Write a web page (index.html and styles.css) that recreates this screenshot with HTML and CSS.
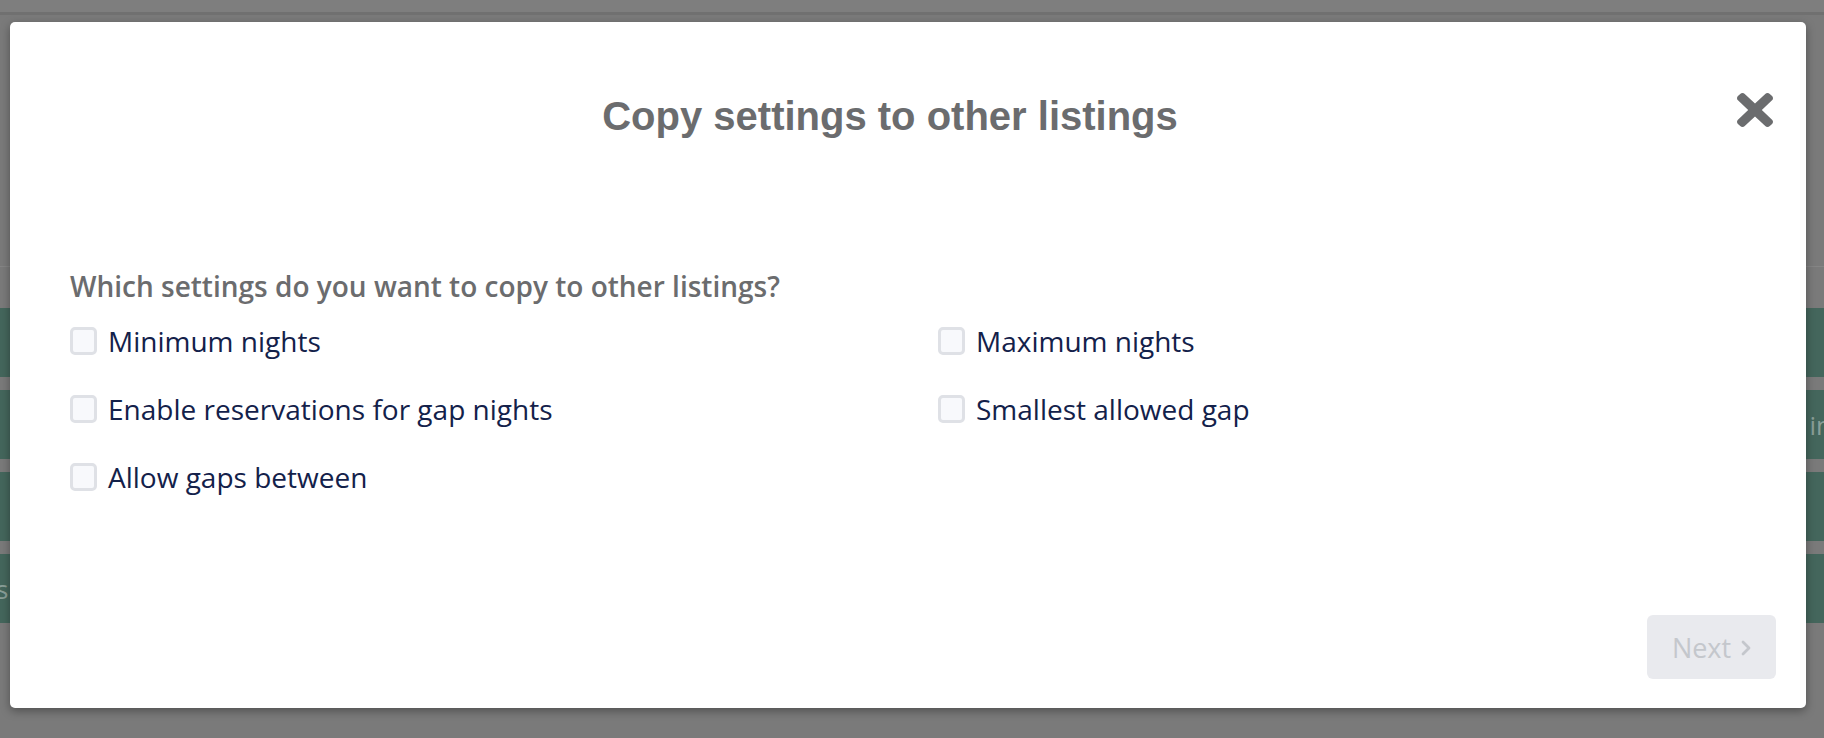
FILE: index.html
```html
<!DOCTYPE html>
<html lang="en">
<head>
<meta charset="utf-8">
<title>Copy settings to other listings</title>
<link rel="stylesheet" href="styles.css">
</head>
<body>
<div class="page">
  <div class="topbar"></div>
  <div class="subline"></div>
  <div class="rows">
    <div class="row"></div>
    <div class="row"><span class="row-text right">in</span></div>
    <div class="row"></div>
    <div class="row"><span class="row-text">s</span></div>
  </div>
</div>

<div class="modal" role="dialog" aria-labelledby="modal-title">
  <button class="close" aria-label="Close">
    <svg viewBox="0 80 352 352" width="36" height="34" preserveAspectRatio="none" aria-hidden="true">
      <path fill="#6b6c6e" d="M242.72 256l100.07-100.07c12.28-12.28 12.28-32.19 0-44.48l-22.24-22.24c-12.28-12.28-32.19-12.28-44.48 0L176 189.28 75.93 89.21c-12.28-12.28-32.19-12.28-44.48 0L9.21 111.45c-12.28 12.28-12.28 32.19 0 44.48L109.28 256 9.21 356.07c-12.28 12.28-12.28 32.19 0 44.48l22.24 22.24c12.28 12.28 32.2 12.28 44.48 0L176 322.72l100.07 100.07c12.28 12.28 32.2 12.28 44.48 0l22.24-22.24c12.28-12.28 12.28-32.19 0-44.48L242.72 256z"/>
    </svg>
  </button>
  <div class="header">
    <h1 id="modal-title" class="title">Copy settings to other listings</h1>
  </div>
  <div class="body">
    <p class="question">Which settings do you want to copy to other listings?</p>
    <div class="options">
      <label class="option"><span class="box"></span><span class="label">Minimum nights</span></label>
      <label class="option"><span class="box"></span><span class="label">Maximum nights</span></label>
      <label class="option"><span class="box"></span><span class="label">Enable reservations for gap nights</span></label>
      <label class="option"><span class="box"></span><span class="label">Smallest allowed gap</span></label>
      <label class="option"><span class="box"></span><span class="label">Allow gaps between</span></label>
    </div>
  </div>
  <div class="footer">
    <button class="next" disabled>
      <span>Next</span>
      <svg class="chev" viewBox="0 0 10 16" width="10" height="16" aria-hidden="true">
        <polyline points="2,2 8,8 2,14" fill="none" stroke="#c4c7cc" stroke-width="2.8" stroke-linecap="round" stroke-linejoin="round"/>
      </svg>
    </button>
  </div>
</div>
</body>
</html>
```

FILE: styles.css
```css
* { box-sizing: border-box; }

html, body {
  margin: 0;
  padding: 0;
}

body {
  width: 1824px;
  height: 738px;
  overflow: hidden;
  background: #7a7a7a;
  font-family: "Open Sans", "Liberation Sans", sans-serif;
  position: relative;
}

/* dimmed page behind the modal */
.page {
  display: flex;
  flex-direction: column;
}

.topbar {
  height: 15px;
  background: #7e7e7e;
  border-bottom: 3px solid #707070;
}

.subline {
  height: 252px;
  border-bottom: 1px solid #858585;
}

.rows {
  margin-top: 41px;
  display: flex;
  flex-direction: column;
  gap: 13px;
}

.row {
  height: 69px;
  background: #44665c;
  display: flex;
  align-items: center;
  justify-content: flex-start;
  position: relative;
}

.row-text {
  color: #8a9f98;
  font-size: 26px;
  margin-left: -4px;
}

.row-text.right {
  margin-left: auto;
  margin-right: -8px;
}

/* modal */
.modal {
  position: absolute;
  top: 22px;
  left: 10px;
  width: 1796px;
  background: #fff;
  border-radius: 5px;
  box-shadow: 0 3px 10px rgba(0, 0, 0, 0.35);
  display: flex;
  flex-direction: column;
}

.close {
  position: absolute;
  top: 71px;
  right: 33px;
  width: 36px;
  height: 34px;
  padding: 0;
  border: 0;
  background: transparent;
  display: flex;
}

.header {
  padding-top: 70px;
  padding-right: 36px;
  display: flex;
  justify-content: center;
}

.title {
  margin: 0;
  font-family: "Liberation Sans", Arial, sans-serif;
  font-weight: 700;
  font-size: 40px;
  line-height: 48px;
  color: #6b6c6e;
}

.body {
  padding: 0 30px;
  margin-top: 127px;
}

.question {
  margin: 0 0 2px;
  padding: 0 30px;
  font-weight: 600;
  font-size: 28px;
  line-height: 38px;
  color: #6b6c6e;
}

.options {
  display: grid;
  grid-template-columns: 1fr 1fr;
  grid-auto-rows: 68px;
}

.option {
  padding-left: 30px;
  display: flex;
  align-items: center;
  gap: 11px;
}

.box {
  width: 27px;
  height: 28px;
  border: 3px solid #dfe1e6;
  border-radius: 5px;
  background: #f8f9fc;
  flex: none;
}

.label {
  font-size: 28px;
  line-height: 36px;
  color: #13214a;
}

.footer {
  padding: 104px 30px 29px;
  display: flex;
  justify-content: flex-end;
}

.next {
  width: 129px;
  height: 64px;
  border: 0;
  border-radius: 6px;
  background: #e9eaee;
  color: #c4c7cc;
  font-family: "Open Sans", "Liberation Sans", sans-serif;
  font-weight: 400;
  font-size: 27px;
  display: flex;
  align-items: center;
  justify-content: center;
  gap: 10px;
  padding: 0;
}

.chev {
  margin-top: 2px;
}
```
